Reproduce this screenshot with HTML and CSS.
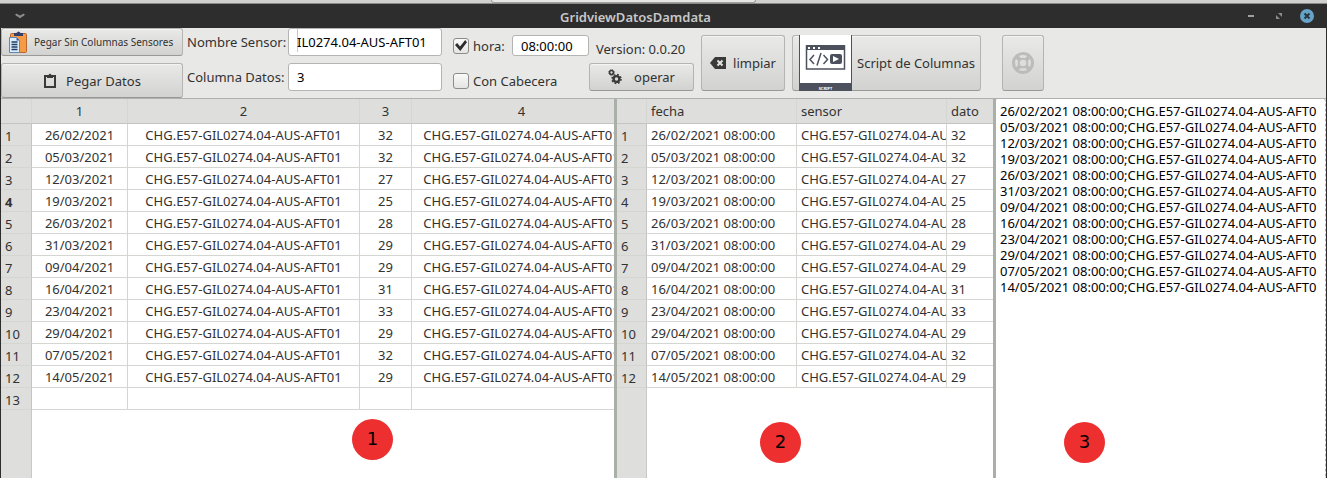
FILE: index.html
```html
<!DOCTYPE html>
<html lang="es">
<head>
<meta charset="utf-8">
<title>GridviewDatosDamdata</title>
<link rel="stylesheet" href="styles.css">
</head>
<body>
<div class="backdrop"><div class="backdrop-tab"></div></div>
<div class="window">
  <header class="titlebar">
    <button class="title-btn title-menu" aria-label="Menú"><svg width="10" height="6" viewBox="0 0 10 6"><path d="M1 1c1 2 2 1 4 3 2-2 3-1 4-3" fill="none" stroke="#8c8c8c" stroke-width="2"/></svg></button>
    <h1 class="title">GridviewDatosDamdata</h1>
    <div class="title-controls">
      <button class="title-btn" aria-label="Minimizar"><svg width="14" height="14" viewBox="0 0 14 14"><path d="M4 6h6v2H4z" fill="#a0a0a0"/></svg></button>
      <button class="title-btn" aria-label="Maximizar"><svg width="14" height="14" viewBox="0 0 14 14"><path d="M6 4h4v4zM4 6v4h4z" fill="#8c8c8c"/></svg></button>
      <button class="title-btn" aria-label="Cerrar"><svg width="14" height="14" viewBox="0 0 14 14"><circle cx="7" cy="7" r="7" fill="#66a3c7"/><path d="M4.5 4.500l5 5m0-5l-5 5" stroke="#263540" stroke-width="2"/></svg></button>
    </div>
  </header>

  <div class="toolbar">
    <div class="paste-group">
      <button class="btn btn-small">
        <svg width="20" height="22" viewBox="0 0 20 22"><rect x="2.500" y="2.500" width="16" height="19" rx="1" fill="#f59a45" stroke="#b9662c"/><path d="M6 2h2.500q2-3 4 0H15v3H6z" fill="#34406b"/><path d="M1.500 6.500h7l3 3v12h-10z" fill="#dcecfa" stroke="#5d87b5"/><path d="M8.500 6.500v3h3z" fill="#355ba8"/><path d="M3.500 11h6M3.500 13.500h6M3.500 16h6M3.500 18.500h6" stroke="#1f3c66" stroke-width="1.300"/></svg>
        <span>Pegar Sin Columnas Sensores</span>
      </button>
      <button class="btn btn-paste">
        <svg width="14" height="16" viewBox="0 0 14 16"><path d="M2 3h10v11H2z" fill="none" stroke="#3a3a3a" stroke-width="2"/><path d="M4 2h1.500q1.500-2.500 3 0H10v3H4z" fill="#3a3a3a"/></svg>
        <span>Pegar Datos</span>
      </button>
    </div>
    <div class="fields">
      <label for="sensor">Nombre Sensor:</label>
      <input class="text-input caret" id="sensor" type="text" value="IL0274.04-AUS-AFT01">
      <label for="columna">Columna Datos:</label>
      <input class="text-input" id="columna" type="text" value="3">
    </div>
    <div class="options">
      <div class="option">
        <input class="check" id="hora" type="checkbox" checked><label for="hora">hora:</label>
        <input class="text-input time" type="text" value="08:00:00" aria-label="Hora">
      </div>
      <div class="option">
        <input class="check" id="cabecera" type="checkbox"><label for="cabecera">Con Cabecera</label>
      </div>
    </div>
    <div class="run-group">
      <span class="version">Version: 0.0.20</span>
      <button class="btn btn-run">
        <svg width="14" height="16" viewBox="0 0 14 16"><circle cx="3.500" cy="3.500" r="1.900" fill="none" stroke="#3a3a3a" stroke-width="1.500"/><circle cx="3.500" cy="3.500" r="2.800" fill="none" stroke="#3a3a3a" stroke-dasharray="1.100 1.100"/><circle cx="8.500" cy="10" r="2.900" fill="none" stroke="#3a3a3a" stroke-width="2.400"/><circle cx="8.500" cy="10" r="4.500" fill="none" stroke="#3a3a3a" stroke-width="1.500" stroke-dasharray="1.770 1.770"/></svg>
        <span>operar</span>
      </button>
    </div>
    <button class="btn btn-tall btn-clear">
      <svg width="16" height="12" viewBox="0 0 16 12"><path d="M5 0h11v12H5L0 6z" fill="#3a3a3a"/><path d="M7.500 3.500l5 5m0-5l-5 5" stroke="#e4e4e2" stroke-width="2"/></svg>
      <span>limpiar</span>
    </button>
    <button class="btn btn-tall btn-script">
      <svg width="53" height="56" viewBox="0 0 53 56"><path d="M0 0h53v56H0z" fill="#4d515d"/><path d="M1 0h51v48H1z" fill="#fff"/><rect x="7.500" y="11" width="38" height="23" fill="#fff" stroke="#4d515d" stroke-width="1.500"/><path d="M7 10h39v5H7z" fill="#4d515d"/><path d="M9 12h2v2H9zM14 12h2v2h-2zM19 12h2v2h-2z" fill="#fff"/><path d="M15 20l-4 4.500 4 4.500M22 18l-4 12.500M24.500 20l4 4.500-4 4.500" fill="none" stroke="#4d515d" stroke-width="1.500"/><rect x="31" y="19" width="12" height="10" rx="2" fill="#4d515d"/><path d="M34 21l6 3-6 3z" fill="#fff"/><text class="icon-text" x="26.500" y="55" text-anchor="middle">SCRIPT</text></svg>
      <span>Script de Columnas</span>
    </button>
    <button class="btn btn-tall btn-help" aria-label="Ayuda" disabled>
      <svg width="22" height="22" viewBox="0 0 22 22"><circle cx="11" cy="11" r="9.500" fill="none" stroke="#bcbcbc" stroke-width="3"/><circle cx="11" cy="11" r="4.300" fill="none" stroke="#bcbcbc" stroke-width="2"/><path d="M4 4l4 4M18 4l-4 4M4 18l4-4M18 18l-4-4" stroke="#bcbcbc" stroke-width="4"/></svg>
    </button>
  </div>

  <main class="panels">
    <section class="panel panel-source">
      <table class="grid grid-source">
        <colgroup><col class="c-num"><col class="c-date"><col class="c-code"><col class="c-value"><col class="c-extra"></colgroup>
        <thead><tr><th></th><th>1</th><th>2</th><th>3</th><th>4</th></tr></thead>
        <tbody>
          <tr><th>1</th><td>26/02/2021</td><td>CHG.E57-GIL0274.04-AUS-AFT01</td><td>32</td><td>CHG.E57-GIL0274.04-AUS-AFT01</td></tr>
          <tr><th>2</th><td>05/03/2021</td><td>CHG.E57-GIL0274.04-AUS-AFT01</td><td>32</td><td>CHG.E57-GIL0274.04-AUS-AFT01</td></tr>
          <tr><th>3</th><td>12/03/2021</td><td>CHG.E57-GIL0274.04-AUS-AFT01</td><td>27</td><td>CHG.E57-GIL0274.04-AUS-AFT01</td></tr>
          <tr class="current"><th>4</th><td>19/03/2021</td><td>CHG.E57-GIL0274.04-AUS-AFT01</td><td>25</td><td>CHG.E57-GIL0274.04-AUS-AFT01</td></tr>
          <tr><th>5</th><td>26/03/2021</td><td>CHG.E57-GIL0274.04-AUS-AFT01</td><td>28</td><td>CHG.E57-GIL0274.04-AUS-AFT01</td></tr>
          <tr><th>6</th><td>31/03/2021</td><td>CHG.E57-GIL0274.04-AUS-AFT01</td><td>29</td><td>CHG.E57-GIL0274.04-AUS-AFT01</td></tr>
          <tr><th>7</th><td>09/04/2021</td><td>CHG.E57-GIL0274.04-AUS-AFT01</td><td>29</td><td>CHG.E57-GIL0274.04-AUS-AFT01</td></tr>
          <tr><th>8</th><td>16/04/2021</td><td>CHG.E57-GIL0274.04-AUS-AFT01</td><td>31</td><td>CHG.E57-GIL0274.04-AUS-AFT01</td></tr>
          <tr><th>9</th><td>23/04/2021</td><td>CHG.E57-GIL0274.04-AUS-AFT01</td><td>33</td><td>CHG.E57-GIL0274.04-AUS-AFT01</td></tr>
          <tr><th>10</th><td>29/04/2021</td><td>CHG.E57-GIL0274.04-AUS-AFT01</td><td>29</td><td>CHG.E57-GIL0274.04-AUS-AFT01</td></tr>
          <tr><th>11</th><td>07/05/2021</td><td>CHG.E57-GIL0274.04-AUS-AFT01</td><td>32</td><td>CHG.E57-GIL0274.04-AUS-AFT01</td></tr>
          <tr><th>12</th><td>14/05/2021</td><td>CHG.E57-GIL0274.04-AUS-AFT01</td><td>29</td><td>CHG.E57-GIL0274.04-AUS-AFT01</td></tr>
          <tr><th>13</th><td></td><td></td><td></td><td></td></tr>
        </tbody>
      </table>
      <span class="marker marker-1">1</span>
    </section>
    <div class="splitter"></div>
    <section class="panel panel-result">
      <table class="grid grid-result">
        <colgroup><col class="c-num"><col class="c-stamp"><col class="c-stamp"><col></colgroup>
        <thead><tr><th></th><th>fecha</th><th>sensor</th><th>dato</th></tr></thead>
        <tbody>
          <tr><th>1</th><td>26/02/2021 08:00:00</td><td>CHG.E57-GIL0274.04-AUS-AFT01</td><td>32</td></tr>
          <tr><th>2</th><td>05/03/2021 08:00:00</td><td>CHG.E57-GIL0274.04-AUS-AFT01</td><td>32</td></tr>
          <tr><th>3</th><td>12/03/2021 08:00:00</td><td>CHG.E57-GIL0274.04-AUS-AFT01</td><td>27</td></tr>
          <tr><th>4</th><td>19/03/2021 08:00:00</td><td>CHG.E57-GIL0274.04-AUS-AFT01</td><td>25</td></tr>
          <tr><th>5</th><td>26/03/2021 08:00:00</td><td>CHG.E57-GIL0274.04-AUS-AFT01</td><td>28</td></tr>
          <tr><th>6</th><td>31/03/2021 08:00:00</td><td>CHG.E57-GIL0274.04-AUS-AFT01</td><td>29</td></tr>
          <tr><th>7</th><td>09/04/2021 08:00:00</td><td>CHG.E57-GIL0274.04-AUS-AFT01</td><td>29</td></tr>
          <tr><th>8</th><td>16/04/2021 08:00:00</td><td>CHG.E57-GIL0274.04-AUS-AFT01</td><td>31</td></tr>
          <tr><th>9</th><td>23/04/2021 08:00:00</td><td>CHG.E57-GIL0274.04-AUS-AFT01</td><td>33</td></tr>
          <tr><th>10</th><td>29/04/2021 08:00:00</td><td>CHG.E57-GIL0274.04-AUS-AFT01</td><td>29</td></tr>
          <tr><th>11</th><td>07/05/2021 08:00:00</td><td>CHG.E57-GIL0274.04-AUS-AFT01</td><td>32</td></tr>
          <tr><th>12</th><td>14/05/2021 08:00:00</td><td>CHG.E57-GIL0274.04-AUS-AFT01</td><td>29</td></tr>
        </tbody>
      </table>
      <span class="marker marker-2">2</span>
    </section>
    <div class="splitter"></div>
    <section class="panel panel-output">
      <textarea class="output" aria-label="Salida" wrap="off" spellcheck="false">26/02/2021 08:00:00;CHG.E57-GIL0274.04-AUS-AFT01;32
05/03/2021 08:00:00;CHG.E57-GIL0274.04-AUS-AFT01;32
12/03/2021 08:00:00;CHG.E57-GIL0274.04-AUS-AFT01;27
19/03/2021 08:00:00;CHG.E57-GIL0274.04-AUS-AFT01;25
26/03/2021 08:00:00;CHG.E57-GIL0274.04-AUS-AFT01;28
31/03/2021 08:00:00;CHG.E57-GIL0274.04-AUS-AFT01;29
09/04/2021 08:00:00;CHG.E57-GIL0274.04-AUS-AFT01;29
16/04/2021 08:00:00;CHG.E57-GIL0274.04-AUS-AFT01;31
23/04/2021 08:00:00;CHG.E57-GIL0274.04-AUS-AFT01;33
29/04/2021 08:00:00;CHG.E57-GIL0274.04-AUS-AFT01;29
07/05/2021 08:00:00;CHG.E57-GIL0274.04-AUS-AFT01;32
14/05/2021 08:00:00;CHG.E57-GIL0274.04-AUS-AFT01;29</textarea>
      <span class="marker marker-3">3</span>
    </section>
  </main>
</div>
</body>
</html>
```
FILE: styles.css
```css
* {
  box-sizing: border-box;
}

body {
  margin: 0;
  min-height: 100vh;
  display: flex;
  flex-direction: column;
  background: #fff;
  color: #323232;
  font: 13px/16px "Noto Sans", "Open Sans", sans-serif;
}

button,
input,
textarea {
  font: inherit;
  color: inherit;
}

.backdrop {
  height: 4px;
  background: #d0d0ce;
  border-bottom: 1px solid #8a8a88;
}

.backdrop-tab {
  width: 20%;
  height: 3px;
  margin-left: 37%;
  background: #e6e6e4;
  border: 1px solid #a0a09e;
  border-top: 0;
  border-radius: 0 0 3px 3px;
}

.window {
  flex: 1;
  display: flex;
  flex-direction: column;
  border: solid #2d2d2d;
  border-width: 0 1px;
  background: #e8e8e6;
}

.titlebar {
  display: flex;
  align-items: center;
  height: 24px;
  background: #2d2d2d;
}

.title {
  flex: 1;
  margin: 0;
  padding-top: 2px;
  color: #c8c8c8;
  font-size: 13px;
  font-weight: 600;
  text-align: center;
}

.title-btn {
  display: flex;
  padding: 0;
  border: 0;
  background: none;
}

.title-menu {
  width: 40px;
  padding-left: 14px;
}

.title-controls {
  display: flex;
  gap: 14px;
  width: 96px;
  padding-left: 14px;
}

.toolbar {
  display: flex;
  align-items: flex-start;
  height: 70px;
}

.btn {
  display: flex;
  align-items: center;
  justify-content: center;
  padding: 0;
  border: 1px solid #b4b4b2;
  border-bottom-color: #999997;
  border-radius: 3px;
  background: linear-gradient(#e9e9e7, #d2d2d0);
  box-shadow: inset 0 1px #f4f4f2;
  white-space: nowrap;
}

.paste-group {
  display: flex;
  flex-direction: column;
  gap: 7px;
  width: 182px;
}

.btn-small {
  height: 28px;
  justify-content: flex-start;
  gap: 6px;
  padding-left: 6px;
  font-size: 10px;
}

.btn-paste {
  height: 35px;
  gap: 9px;
}

.fields {
  display: grid;
  grid-template-columns: 101px 154px;
  grid-auto-rows: 28px;
  row-gap: 7px;
  align-items: center;
  margin-left: 4px;
  white-space: nowrap;
}

.text-input {
  width: 100%;
  height: 28px;
  padding: 0 8px;
  border: 1px solid #b4b4b2;
  border-radius: 3px;
  background: #fff;
  color: #000;
}

.caret {
  background: linear-gradient(#c8c8c8, #c8c8c8) 8px 0 / 1px 23px no-repeat #fff;
}

.options {
  display: flex;
  flex-direction: column;
  gap: 14px;
  width: 136px;
  margin-left: 11px;
  padding-top: 7px;
}

.option {
  display: flex;
  align-items: center;
  height: 21px;
  white-space: nowrap;
}

.option label {
  padding: 1px 0 0 4px;
}

.check {
  appearance: none;
  width: 16px;
  height: 16px;
  margin: 0;
  border: 1px solid #8c8c8a;
  border-radius: 3px;
  background: linear-gradient(#fafafa, #e4e4e2);
}

.check:checked {
  display: grid;
  place-items: center;
}

.check:checked::before {
  content: "";
  width: 12px;
  height: 12px;
  background: #2d2d2d;
  clip-path: polygon(0 45%, 18% 30%, 42% 58%, 85% 5%, 100% 22%, 44% 95%);
}

.time {
  width: 77px;
  height: 21px;
  margin-left: auto;
}

.run-group {
  display: flex;
  flex-direction: column;
  width: 105px;
  padding-top: 7px;
}

.version {
  height: 28px;
  padding: 6px 0 0 7px;
}

.btn-run {
  height: 28px;
  gap: 12px;
}

.btn-tall {
  height: 56px;
  margin: 7px 0 0 7px;
}

.btn-clear {
  width: 84px;
  gap: 7px;
}

.btn-script {
  width: 189px;
  justify-content: flex-start;
  gap: 5px;
  padding-left: 6px;
}

.btn-script svg {
  flex: none;
}

.icon-text {
  fill: #fff;
  font: bold 4px "Noto Sans", sans-serif;
}

.btn-help {
  width: 42px;
  margin-left: 21px;
}

.panels {
  flex: 1;
  display: flex;
  border-top: 1px solid #b0b0ae;
}

.panel {
  position: relative;
  min-width: 0;
  overflow: hidden;
}

.panel-source {
  flex: 613 1 0;
  background: linear-gradient(to right, #dededc 30px, #c8c8c6 30px, #c8c8c6 31px, #fff 31px);
}

.panel-result {
  flex: 376 1 0;
  background: linear-gradient(to right, #dededc 29px, #c8c8c6 29px, #c8c8c6 30px, #fff 30px);
}

.splitter {
  width: 3px;
  background: #aab0a8;
}

.grid {
  table-layout: fixed;
  border-collapse: separate;
  border-spacing: 0;
}

.grid-source {
  width: 631px;
}

.grid-result {
  width: 100%;
}

.grid-source .c-num {
  width: 31px;
}

.grid-result .c-num {
  width: 30px;
}

.c-date {
  width: 96px;
}

.c-code {
  width: 232px;
}

.c-value {
  width: 52px;
}

.c-stamp {
  width: 150px;
}

.grid th,
.grid td {
  height: 22px;
  padding: 0;
  border: solid #d4d6d2;
  border-width: 0 1px 1px 0;
  overflow: hidden;
  font-weight: 400;
  text-align: center;
  white-space: nowrap;
}

.grid thead th {
  height: 25px;
  background: #dededc;
  border-bottom-color: #c4c4c2;
}

.grid tbody th {
  padding: 2px 0 0 4px;
  border-right-color: #c4c4c2;
  text-align: left;
}

.grid .current th {
  font-weight: 700;
}

.grid-result td,
.grid-result thead th {
  padding-left: 4px;
  text-align: left;
}

.grid-result th:last-child,
.grid-result td:last-child {
  border-right: 0;
}

.panel-output {
  flex: 317 1 0;
  display: flex;
  padding: 4px 8px 0 4px;
  background: #fff;
  border-right: 1px dashed #b4b4b2;
  border-radius: 3px 3px 0 0;
}

.output {
  flex: 1;
  min-width: 0;
  padding: 0;
  border: 0;
  background: none;
  color: #000;
  resize: none;
  overflow: hidden;
  white-space: pre;
}

.marker {
  position: absolute;
  width: 41px;
  height: 41px;
  border-radius: 50%;
  background: #ed2f2f;
  color: #000;
  font: 18px/40px "DejaVu Sans", sans-serif;
  text-align: center;
}

.marker-1 {
  left: 351px;
  top: 320px;
}

.marker-2 {
  left: 143px;
  top: 323px;
}

.marker-3 {
  left: 68px;
  top: 323px;
}
```
